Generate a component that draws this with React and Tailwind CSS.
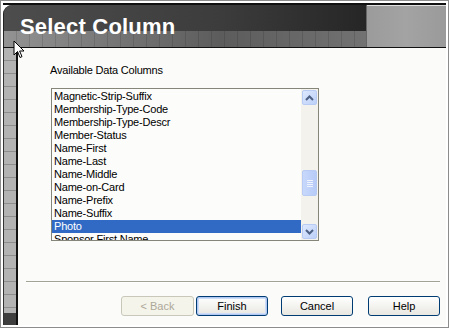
const columns = [
  'Magnetic-Strip-Suffix',
  'Membership-Type-Code',
  'Membership-Type-Descr',
  'Member-Status',
  'Name-First',
  'Name-Last',
  'Name-Middle',
  'Name-on-Card',
  'Name-Prefix',
  'Name-Suffix',
  'Photo',
  'Sponsor First Name',
]

function ScrollButton({ dir }) {
  return (
    <div className="flex h-[15px] w-[15px] items-center justify-center rounded-[2px] border border-[#b7cbf5] bg-[linear-gradient(135deg,#dde8fd,#bcd0f8)]">
      <svg width="9" height="6" viewBox="0 0 9 6">
        <path
          d={dir === 'up' ? 'M1 5 L4.5 1.5 L8 5' : 'M1 1 L4.5 4.5 L8 1'}
          fill="none"
          stroke="#4d6185"
          strokeWidth="2"
        />
      </svg>
    </div>
  )
}

function ListBox() {
  return (
    <div className="ml-[33px] flex h-[153px] w-[268px] overflow-hidden border border-[#86857a] bg-[#fcfcfa]">
      <div className="flex-1 overflow-hidden pt-px">
        {columns.map((c) => {
          const sel = c === 'Photo'
          return (
            <div
              key={c}
              className={`h-[13px] pl-[2px] text-[11px] leading-[13px] tracking-[-0.2px] ${
                sel ? 'bg-[#316ac5] text-white' : 'text-black'
              }`}
            >
              {c}
            </div>
          )
        })}
      </div>
      {/* XP scrollbar */}
      <div className="flex w-[17px] flex-col items-center bg-[#f3f2ec] py-px">
        <ScrollButton dir="up" />
        <div className="h-[65px]" />
        <div className="flex h-[26px] w-[15px] flex-col items-center justify-center gap-[1px] rounded-[2px] border border-[#b7cbf5] bg-[linear-gradient(90deg,#c8d8fc,#b6cbf7)]">
          <div className="h-px w-[6px] bg-[#eef3fe]" />
          <div className="h-px w-[6px] bg-[#eef3fe]" />
          <div className="h-px w-[6px] bg-[#eef3fe]" />
          <div className="h-px w-[6px] bg-[#eef3fe]" />
        </div>
        <div className="flex-1" />
        <ScrollButton dir="down" />
      </div>
    </div>
  )
}

function Button({ children, variant, w = 'w-[72px]' }) {
  const base = `flex h-[20px] ${w} items-center justify-center rounded-[3px] border text-[11px]`
  if (variant === 'disabled')
    return (
      <div className={`${base} border-[#c9c7ba] bg-[#f5f4ea] text-[#aca899]`}>{children}</div>
    )
  if (variant === 'default')
    return (
      <div
        className={`${base} border-[#003c74] bg-[linear-gradient(#ffffff,#e8e7e0)] text-black shadow-[inset_0_0_0_1px_#b0c8f2,inset_0_0_0_2px_#cddcf7]`}
      >
        {children}
      </div>
    )
  return (
    <div className={`${base} border-[#003c74] bg-[linear-gradient(#ffffff,#e8e7e0)] text-black`}>
      {children}
    </div>
  )
}

export default function App() {
  return (
    <div className="relative h-[328px] w-[449px] overflow-hidden border border-[#8c8c8c] bg-white p-[2px] font-['Liberation_Sans',Arial,sans-serif]">
      <div className="flex h-full flex-col border-t-2 border-[#111]">
        {/* title band */}
        <div className="flex h-[43px] border-b border-[#111]">
          <div className="relative w-[363px] overflow-hidden rounded-tl-[9px] border-l border-[#222] bg-[#444]">
            <div className="h-[26px] bg-[linear-gradient(90deg,#4d4d4d,#3c3c3c_60%,#262626)]" />
            <div className="h-[17px] bg-[linear-gradient(90deg,#939393,#767676_30%,#5c5c5c_60%,#727272)]">
              <div className="h-full bg-[repeating-linear-gradient(90deg,transparent_0,transparent_12px,rgba(0,0,0,0.12)_12px,rgba(0,0,0,0.12)_13px)]" />
            </div>
            <div className="absolute left-[16px] top-[9px] text-[22px] font-bold leading-[26px] tracking-[0.2px] text-white">
              Select Column
            </div>
          </div>
          <div className="w-px bg-[#666]" />
          <div className="flex-1 border-t border-[#e0e0e0] bg-[linear-gradient(90deg,#9b9b9b,#a3a3a3_50%,#9a9a9a)]" />
        </div>

        <div className="flex flex-1">
          {/* window edge behind */}
          <div className="flex w-[15px] flex-col border-l border-r-2 border-l-[#333] border-r-[#111] bg-[#a9a9a9]">
            <div className="flex-1 bg-[repeating-linear-gradient(180deg,#b3b3b3_0,#b3b3b3_12px,#8e8e8e_12px,#8e8e8e_13px)]" />
            <div className="h-[12px] bg-[#3e3e3e]" />
          </div>

          {/* content */}
          <div className="flex flex-1 flex-col bg-[#fbfbf9] pt-[16px] text-black">
            <div className="ml-[32px] h-[13px] text-[11px] leading-[13px] tracking-[-0.2px]">
              Available Data Columns
            </div>
            <div className="mt-[11px]">
              <ListBox />
            </div>
            <div className="ml-[8px] mr-[6px] mt-[40px] h-[2px] border-t border-b border-t-[#a3a296] border-b-white" />
            <div className="mt-[13px] flex items-center pr-[6px]">
              <div className="flex-1" />
              <Button variant="disabled" w="w-[73px]">
                &lt; Back
              </Button>
              <div className="w-[2px]" />
              <Button variant="default">Finish</Button>
              <div className="w-[13px]" />
              <Button>Cancel</Button>
              <div className="w-[15px]" />
              <Button>Help</Button>
            </div>
          </div>
        </div>
      </div>

      {/* mouse pointer */}
      <svg className="absolute left-[12px] top-[39px]" width="13" height="20" viewBox="0 0 13 20">
        <path
          d="M1 1 L1 15 L4.5 11.5 L7 17.5 L9 16.6 L6.6 11 L11 11 Z"
          fill="#fff"
          stroke="#000"
          strokeWidth="1"
          strokeLinejoin="miter"
        />
      </svg>
    </div>
  )
}
